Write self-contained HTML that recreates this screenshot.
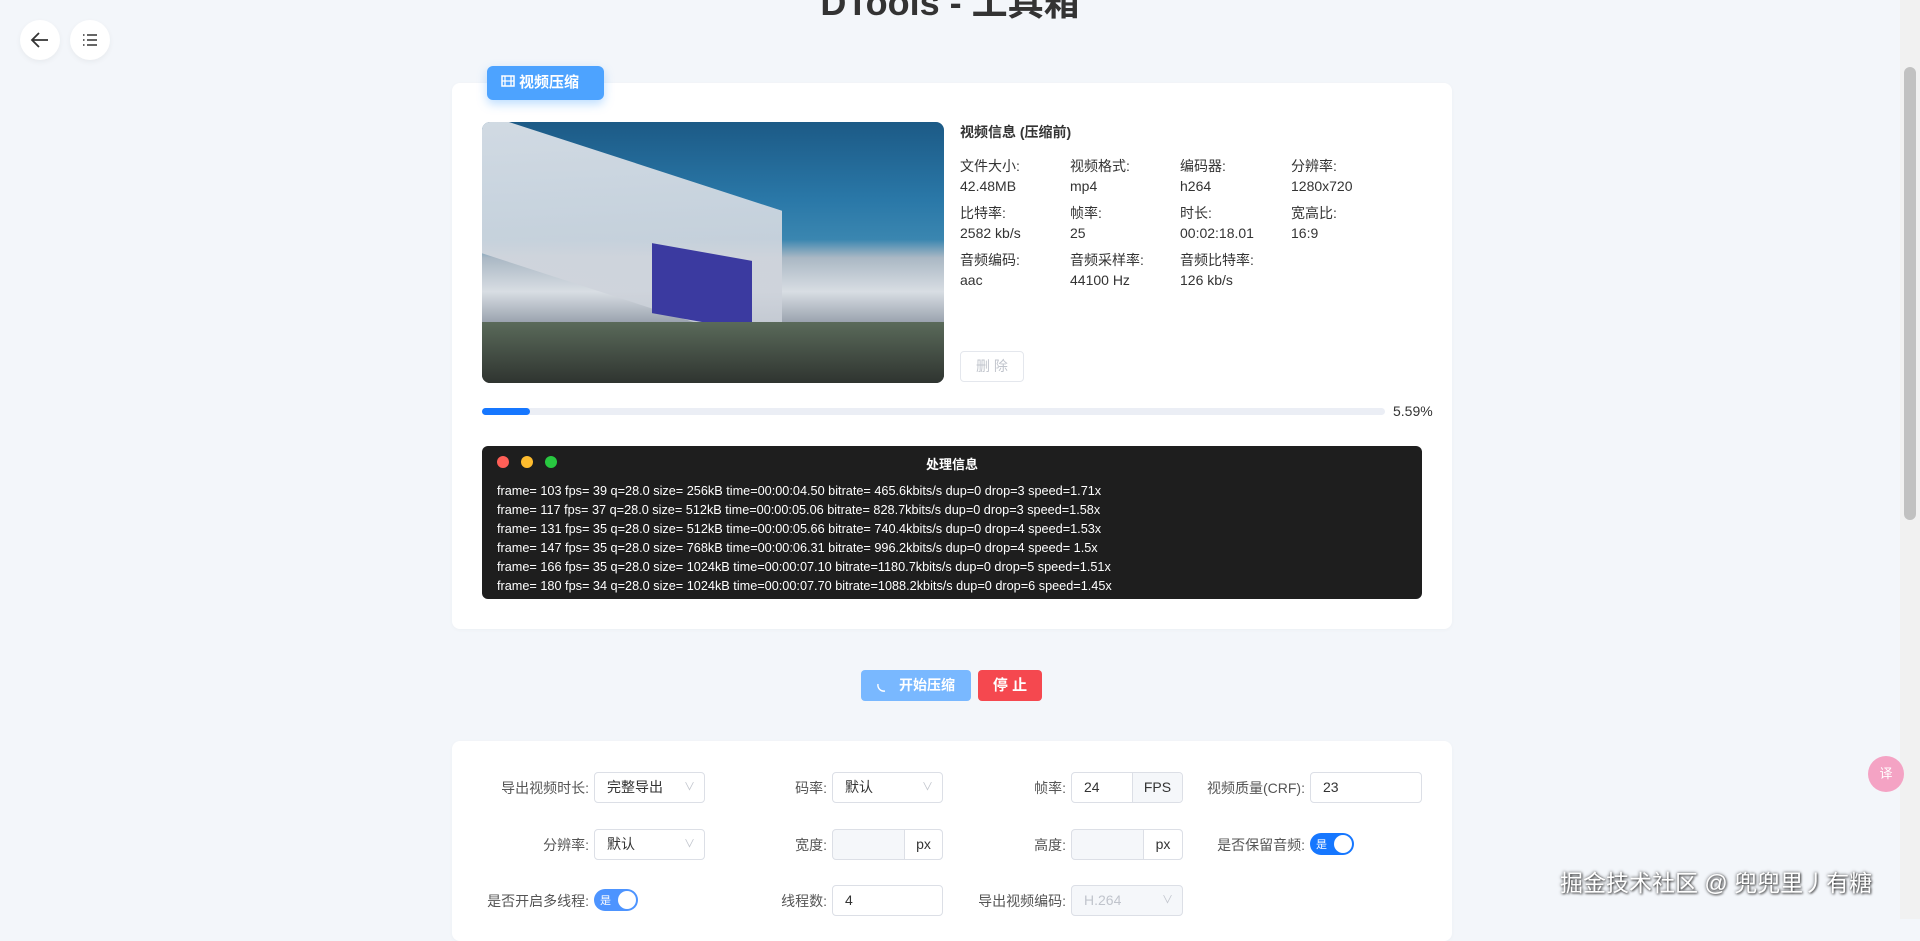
<!DOCTYPE html>
<html><head><meta charset="utf-8"><style>
*{box-sizing:border-box;margin:0;padding:0}
body{width:1920px;height:919px;overflow:hidden;background:#f3f6fa;font-family:"Liberation Sans","Noto Sans CJK SC",sans-serif;color:#333;position:relative}
.abs{position:absolute}
.circ{width:40px;height:40px;border-radius:50%;background:#fff;box-shadow:0 2px 6px rgba(0,0,0,.05)}
.card{background:#fff;border-radius:8px;box-shadow:0 1px 4px rgba(0,0,0,.03)}
.lab{font-size:14px;color:#333}
.val{font-size:14px;color:#333}
.term div{white-space:nowrap}
.fl{font-size:14px;color:#555;text-align:right;width:200px}
.box{border:1px solid #dcdfe6;border-radius:4px;height:31px;background:#fff;font-size:14px;line-height:29px;padding-left:12px;color:#333}
.chev{position:absolute;right:9px;top:0;color:#c0c4cc;font-size:11px}
.add{position:absolute;top:0;bottom:0;right:0;border-left:1px solid #dcdfe6;background:#fff;text-align:center;border-radius:0 4px 4px 0;padding:0}
.sw{width:44px;height:22px;border-radius:11px;background:#1677ff;}
.sw i{position:absolute;right:2px;top:2px;width:18px;height:18px;border-radius:50%;background:#fff}
.sw b{position:absolute;left:6px;top:3px;font-size:11px;color:#fff;font-weight:normal}
</style></head><body>
<div class="abs" style="left:0;width:1900px;top:-26px;text-align:center;font-size:36px;font-weight:bold;color:#333">DTools - 工具箱</div>
<div class="abs circ" style="left:20px;top:20px"><svg width="40" height="40"><path d="M28 20H13M19 13l-7 7 7 7" stroke="#333" stroke-width="1.8" fill="none"/></svg></div>
<div class="abs circ" style="left:70px;top:20px"><svg width="40" height="40"><path d="M17 15h10M17 20h10M17 25h10" stroke="#333" stroke-width="1.6"/><path d="M13 15h1.5M13 20h1.5M13 25h1.5" stroke="#333" stroke-width="1.6"/></svg></div>

<div class="abs card" style="left:452px;top:83px;width:1000px;height:546px"></div>
<div class="abs" style="left:487px;top:66px;width:117px;height:34px;border-radius:6px;background:#4da3ff;box-shadow:0 4px 10px rgba(64,158,255,.35);color:#fff;font-size:15px;font-weight:bold;line-height:34px;padding-left:14px">
<svg width="14" height="14" style="vertical-align:-1px;margin-right:4px"><rect x="1" y="2" width="12" height="10" fill="none" stroke="#fff" stroke-width="1.5"/><path d="M4 2v10M10 2v10M1 7h12" stroke="#fff" stroke-width="1.3"/></svg>视频压缩</div>

<div class="abs" style="left:482px;top:122px;width:462px;height:261px;border-radius:8px;overflow:hidden;background:linear-gradient(180deg,#1c5a86 0%,#2a78a8 30%,#3a86b0 45%,#aab8c4 52%,#d8dde3 65%,#8a93a0 80%,#3a3f4a 100%)">
<div class="abs" style="left:0;top:40px;width:300px;height:140px;background:linear-gradient(160deg,#e6e9ee,#c5cbd4);transform:skewY(18deg);opacity:.9"></div>
<div class="abs" style="left:170px;top:130px;width:100px;height:70px;background:#3b3aa0;transform:skewY(10deg)"></div>
<div class="abs" style="left:0;top:200px;width:462px;height:61px;background:linear-gradient(180deg,#5a6a5a,#2f3430)"></div>
</div>

<div class="abs" style="left:960px;top:122px;font-size:14px;font-weight:bold">视频信息 (压缩前)</div>
<div class="abs lab" style="left:960px;top:156px">文件大小:</div><div class="abs val" style="left:960px;top:178px">42.48MB</div>
<div class="abs lab" style="left:1070px;top:156px">视频格式:</div><div class="abs val" style="left:1070px;top:178px">mp4</div>
<div class="abs lab" style="left:1180px;top:156px">编码器:</div><div class="abs val" style="left:1180px;top:178px">h264</div>
<div class="abs lab" style="left:1291px;top:156px">分辨率:</div><div class="abs val" style="left:1291px;top:178px">1280x720</div>
<div class="abs lab" style="left:960px;top:203px">比特率:</div><div class="abs val" style="left:960px;top:225px">2582 kb/s</div>
<div class="abs lab" style="left:1070px;top:203px">帧率:</div><div class="abs val" style="left:1070px;top:225px">25</div>
<div class="abs lab" style="left:1180px;top:203px">时长:</div><div class="abs val" style="left:1180px;top:225px">00:02:18.01</div>
<div class="abs lab" style="left:1291px;top:203px">宽高比:</div><div class="abs val" style="left:1291px;top:225px">16:9</div>
<div class="abs lab" style="left:960px;top:250px">音频编码:</div><div class="abs val" style="left:960px;top:272px">aac</div>
<div class="abs lab" style="left:1070px;top:250px">音频采样率:</div><div class="abs val" style="left:1070px;top:272px">44100 Hz</div>
<div class="abs lab" style="left:1180px;top:250px">音频比特率:</div><div class="abs val" style="left:1180px;top:272px">126 kb/s</div>
<div class="abs" style="left:960px;top:351px;width:64px;height:31px;border:1px solid #e4e7ed;border-radius:4px;color:#c0c4cc;font-size:14px;text-align:center;line-height:29px;background:#fff">删 除</div>

<div class="abs" style="left:482px;top:408px;width:903px;height:7px;border-radius:4px;background:#ebeef5"><div style="width:48px;height:7px;border-radius:4px;background:#1677ff"></div></div>
<div class="abs" style="left:1393px;top:403px;font-size:14px">5.59%</div>

<div class="abs term" style="left:482px;top:446px;width:940px;height:153px;border-radius:6px;background:#1e1e1e;color:#fff;font-size:12.7px">
<div class="abs" style="left:15px;top:10px;width:12px;height:12px;border-radius:50%;background:#ff5f57"></div>
<div class="abs" style="left:39px;top:10px;width:12px;height:12px;border-radius:50%;background:#febc2e"></div>
<div class="abs" style="left:63px;top:10px;width:12px;height:12px;border-radius:50%;background:#28c840"></div>
<div class="abs" style="left:0;width:940px;top:8px;text-align:center;font-size:13px;font-weight:bold">处理信息</div>
<div class="abs" style="left:15px;top:36px;line-height:18.9px">
<div>frame= 103 fps= 39 q=28.0 size= 256kB time=00:00:04.50 bitrate= 465.6kbits/s dup=0 drop=3 speed=1.71x</div>
<div>frame= 117 fps= 37 q=28.0 size= 512kB time=00:00:05.06 bitrate= 828.7kbits/s dup=0 drop=3 speed=1.58x</div>
<div>frame= 131 fps= 35 q=28.0 size= 512kB time=00:00:05.66 bitrate= 740.4kbits/s dup=0 drop=4 speed=1.53x</div>
<div>frame= 147 fps= 35 q=28.0 size= 768kB time=00:00:06.31 bitrate= 996.2kbits/s dup=0 drop=4 speed= 1.5x</div>
<div>frame= 166 fps= 35 q=28.0 size= 1024kB time=00:00:07.10 bitrate=1180.7kbits/s dup=0 drop=5 speed=1.51x</div>
<div>frame= 180 fps= 34 q=28.0 size= 1024kB time=00:00:07.70 bitrate=1088.2kbits/s dup=0 drop=6 speed=1.45x</div>
</div></div>

<div class="abs" style="left:861px;top:670px;width:110px;height:31px;border-radius:4px;background:#79b8ff;color:#fff;font-size:14px;font-weight:bold;line-height:31px;padding-left:38px">开始压缩<svg class="abs" style="left:14px;top:9px" width="14" height="14"><path d="M3 5a6 6 0 0 0 7 7" stroke="#fff" stroke-width="1.4" fill="none"/></svg></div>
<div class="abs" style="left:978px;top:670px;width:64px;height:31px;border-radius:4px;background:#f5484f;color:#fff;font-size:15px;font-weight:bold;line-height:31px;text-align:center">停 止</div>

<div class="abs card" style="left:452px;top:741px;width:1000px;height:200px"></div>
<div class="abs fl" style="left:389px;top:778px">导出视频时长:</div>
<div class="abs box" style="left:594px;top:772px;width:111px">完整导出<span class="chev">∨</span></div>
<div class="abs fl" style="left:627px;top:778px">码率:</div>
<div class="abs box" style="left:832px;top:772px;width:111px">默认<span class="chev">∨</span></div>
<div class="abs fl" style="left:866px;top:778px">帧率:</div>
<div class="abs box" style="left:1071px;top:772px;width:112px">24<span class="add" style="width:50px;background:#f5f7fa">FPS</span></div>
<div class="abs fl" style="left:1105px;top:778px">视频质量(CRF):</div>
<div class="abs box" style="left:1310px;top:772px;width:112px">23</div>

<div class="abs fl" style="left:389px;top:835px">分辨率:</div>
<div class="abs box" style="left:594px;top:829px;width:111px">默认<span class="chev">∨</span></div>
<div class="abs fl" style="left:627px;top:835px">宽度:</div>
<div class="abs box" style="left:832px;top:829px;width:111px;background:#f5f7fa"><span class="add" style="width:38px">px</span></div>
<div class="abs fl" style="left:866px;top:835px">高度:</div>
<div class="abs box" style="left:1071px;top:829px;width:112px;background:#f5f7fa"><span class="add" style="width:39px">px</span></div>
<div class="abs fl" style="left:1105px;top:835px">是否保留音频:</div>
<div class="abs sw" style="left:1310px;top:833px"><b>是</b><i></i></div>

<div class="abs fl" style="left:389px;top:891px">是否开启多线程:</div>
<div class="abs sw" style="left:594px;top:889px;background:#4d94ff"><b>是</b><i></i></div>
<div class="abs fl" style="left:627px;top:891px">线程数:</div>
<div class="abs box" style="left:832px;top:885px;width:111px">4</div>
<div class="abs fl" style="left:866px;top:891px">导出视频编码:</div>
<div class="abs box" style="left:1071px;top:885px;width:112px;background:#f5f7fa;color:#c0c4cc">H.264<span class="chev">∨</span></div>

<div class="abs" style="left:1900px;top:0;width:20px;height:919px;background:#f1f1f1"><div style="margin:67px 0 0 4px;width:12px;height:453px;border-radius:6px;background:#c1c1c1"></div></div>
<div class="abs" style="left:1868px;top:756px;width:36px;height:36px;border-radius:50%;background:#f4a3c4;color:#fff;font-size:13px;line-height:36px;text-align:center">译</div>
<div class="abs" style="left:1560px;top:864px;font-size:23px;color:#fff;text-shadow:0 0 3px rgba(0,0,0,.7),1px 1px 2px rgba(0,0,0,.6);white-space:nowrap">掘金技术社区 @ 兜兜里丿有糖</div>
</body></html>
